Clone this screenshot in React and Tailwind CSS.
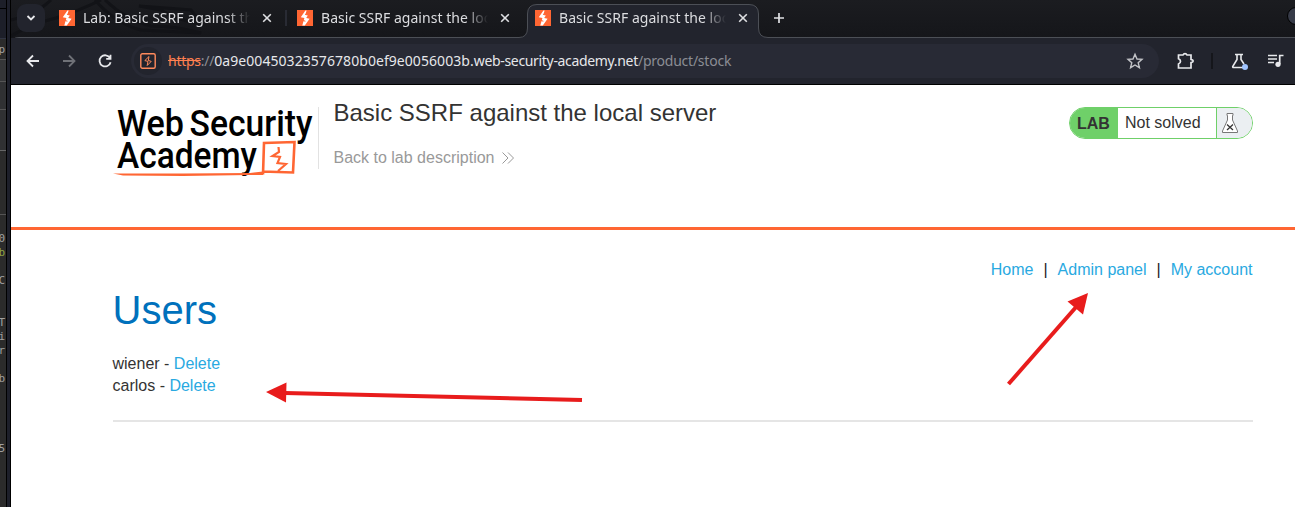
import React from "react";

function BoltIcon({ className }) {
  return (
    <svg className={className} viewBox="0 0 16 16">
      <rect width="16" height="16" fill="#ff6633" />
      <path d="M8.400 .500 L3.800 7.300 L7.400 7.900 L5.300 15.600 L7.800 15.600 L12.600 8.800 L9.200 7.900 L11 5.300 L8.400 4.600 L9.600 .500 Z" fill="#fff" />
      <path d="M8 4.200 L10.800 5.200 M5.600 10.400 L8.400 11.200" stroke="#ff6633" strokeWidth="1" />
    </svg>
  );
}

function Close() {
  return (
    <svg className="size-[10px] shrink-0" viewBox="0 0 10 10" stroke="#dfe0e3" strokeWidth="1.6">
      <path d="M1.2 1.2 L8.8 8.8 M8.8 1.2 L1.2 8.8" />
    </svg>
  );
}

function Tab({ title }) {
  return (
    <div className="flex w-[238px] shrink-0 items-center pl-2">
      <BoltIcon className="size-4 shrink-0" />
      <div className="ml-2 w-[167px] overflow-hidden whitespace-nowrap text-[14px] leading-5 tracking-[0.03px] text-[#dcdde0] [mask-image:linear-gradient(to_right,black_144px,transparent_167px)]">
        {title}
      </div>
      <div className="ml-3">
        <Close />
      </div>
    </div>
  );
}

function TabStrip() {
  return (
    <div className="relative flex h-[38px] items-start bg-linear-to-b from-[#1b1c20] to-[#15161a]">
      <svg className="absolute inset-0 h-[38px] w-[1284px]" viewBox="0 0 1284 38" fill="none">
        <path d="M0 36 Q20 24 45 18 Q70 10 90 0 M0 20 Q25 15 40 0 M84 0 Q105 24 130 30 L190 33 Q165 26 140 26 Q115 20 94 0 M128 6 L180 10 L190 24 Q165 20 150 10 Z" stroke="#121317" strokeWidth="3" />
        <path d="M0 47 V45 Q0 37.5 8 37.5 H508 Q516.500 37.500 516.500 28 V14 Q516.500 4.500 526 4.500 H738 Q747.500 4.500 747.500 14 V28 Q747.500 37.500 757 37.500 H1284 V50 H0 Z" fill="#22242d" stroke="#4c4f56" />
      </svg>
      <div className="relative flex h-9 items-center">
        <div className="ml-[6px] flex h-[28px] w-7 items-center justify-center rounded-[9px] bg-[#22242d]">
          <svg className="size-[10px]" viewBox="0 0 10 10" fill="none" stroke="#e8e9ec" strokeWidth="1.8">
            <path d="M1.500 3 L5 6.500 L8.500 3" />
          </svg>
        </div>
        <div className="ml-[6px] flex">
          <Tab title="Lab: Basic SSRF against the local server" />
          <Tab title="Basic SSRF against the local server" />
          <Tab title="Basic SSRF against the local server" />
        </div>
        <svg className="ml-[8px] size-3" viewBox="0 0 12 12" stroke="#e0e1e4" strokeWidth="1.700">
          <path d="M6 1 V11 M1 6 H11" />
        </svg>
      </div>
      <div className="absolute top-[10px] left-[274px] h-4 w-[2px] bg-[#292b34]" />
      <div className="absolute top-[7px] left-[1276px] h-[18px] w-2 overflow-hidden">
        <div className="size-[18px] rounded-full border border-black bg-[#373b48]" />
      </div>
    </div>
  );
}

function Toolbar() {
  return (
    <div className="flex h-[46px] items-center bg-[#22242d] pl-[14px]">
      <svg className="size-4" viewBox="0 0 16 16" fill="none" stroke="#e8e9ec" strokeWidth="1.800">
        <path d="M14 8 H3 M8 2.500 L2.500 8 L8 13.500" />
      </svg>
      <svg className="ml-5 size-4" viewBox="0 0 16 16" fill="none" stroke="#6f7177" strokeWidth="1.800">
        <path d="M2 8 H13 M8 2.500 L13.500 8 L8 13.500" />
      </svg>
      <svg className="ml-5 size-4" viewBox="0 0 16 16" fill="none" stroke="#e8e9ec" strokeWidth="1.800">
        <path d="M13 5 A5.600 5.600 0 1 0 13.600 9.200 M13.500 1.800 V5.900 H9.200" />
      </svg>
      <div className="ml-[18px] flex h-[34px] w-[1028px] items-center rounded-full bg-[#282a35] pl-[3px]">
        <div className="flex size-7 items-center justify-center rounded-full bg-[#22242d]">
          <svg className="size-4" viewBox="0 0 16 16" fill="none" stroke="#ff8a5c" strokeWidth="1.400">
            <rect x=".8" y=".8" width="14.400" height="14.400" rx="1.500" />
            <path d="M9 3.500 L4.800 7.600 L8 8.400 L7.200 12.500 M9 3.500 L8.300 7.400 L11.200 8.400 L7.200 12.500" strokeWidth="1" />
          </svg>
        </div>
        <div className="ml-[6px] flex-1 whitespace-pre text-[14px] leading-5 text-[#8b8d94]">
          <span className="tracking-[-0.25px]">
            <span className="text-[#ff8050] line-through">https</span>://
          </span>
          <span className="text-[#e6e7ea]">
            <span className="tracking-[0.06px]">0a9e00450323576780b0ef9e0056003b.</span>
            <span className="tracking-[-0.33px]">web-security-academy.net</span>
          </span>
          <span className="tracking-[-0.23px]">/product/stock</span>
        </div>
        <svg className="mr-[15px] size-[18px]" viewBox="0 0 18 18" fill="none" stroke="#c2c3c7" strokeWidth="1.400">
          <path d="M9 2.300 L11 7 L16 7.400 L12.200 10.700 L13.400 15.700 L9 13 L4.600 15.700 L5.800 10.700 L2 7.400 L7 7 Z" />
        </svg>
      </div>
      <svg className="ml-[17px] size-5" viewBox="0 0 20 20" fill="none" stroke="#e8e9ec" strokeWidth="1.700">
        <path d="M2.500 4 H7 Q7.600 2.600 9 2.600 Q10.400 2.600 11 4 H15 V8.300 Q17.200 8.800 17.200 10 Q17.200 11.200 15 11.700 V17 H2.500 V13 Q4.500 12 4.500 10.200 Q4.500 8.500 2.500 7.700 Z" />
      </svg>
      <div className="ml-[15px] h-4 w-[2px] bg-[#15161b]" />
      <svg className="ml-[18px] size-[18px]" viewBox="0 0 18 18" fill="none" stroke="#e8e9ec" strokeWidth="1.600">
        <path d="M4 2.500 H12 M6 2.500 V7.500 L1.700 14.500 Q1.500 15.500 2.500 15.500 H12 M10 2.500 V7.500 L13 12" />
        <circle cx="14" cy="15" r="3" fill="#a0c4ff" stroke="none" />
      </svg>
      <svg className="ml-[18px] size-[18px]" viewBox="0 0 18 18" fill="none" stroke="#e8e9ec" strokeWidth="1.700">
        <path d="M1 3.500 H10 M1 7 H10 M1 10.500 H7 M12.700 12 V3.500 H16.500" />
        <circle cx="11" cy="12.300" r="2.600" fill="#e8e9ec" stroke="none" />
      </svg>
    </div>
  );
}

function Logo() {
  return (
    <svg className="h-[80px] w-[204px] font-['Roboto',sans-serif]" viewBox="0 0 204 80" fill="none">
      <text x="4" y="34" fontSize="37" fontWeight="500" fill="#000" textLength="67" lengthAdjust="spacingAndGlyphs">Web</text>
      <text x="76.500" y="34" fontSize="37" fontWeight="500" fill="#000" textLength="123" lengthAdjust="spacingAndGlyphs">Security</text>
      <text x="4" y="66" fontSize="37" fontWeight="500" fill="#000" textLength="140" lengthAdjust="spacingAndGlyphs">Academy</text>
      <path d="M0 71.500 L70 71.500 L137 71 L150 69.500 L150 73 L137 73 L70 74 L10 73.500 Z" fill="#ff6633" />
      <path d="M150 72.500 L151 41 L181.500 40 L180 70.500 L149 69.500" stroke="#ff6633" strokeWidth="2.600" />
      <path d="M165.500 45 L166 50 L159.500 54 L167 55 L164.500 61 L173 62 L165 69" stroke="#ff6633" strokeWidth="2.200" />
    </svg>
  );
}

function LabHeader() {
  return (
    <header className="flex h-[145px] items-start border-b-[3px] border-[#ff6633] pr-[42px] pl-[101.5px]">
      <div className="flex h-[85px] w-[205px] items-start pt-[17px]">
        <Logo />
      </div>
      <div className="mt-[22px] h-[62px] w-px bg-[#e2e2e2]" />
      <div className="ml-[15px] flex-1 pt-[13px]">
        <h1 className="text-[24px] leading-[30px] text-[#333]">Basic SSRF against the local server</h1>
        <a className="mt-[19px] flex items-center text-[16px] leading-[22px] text-[#999]">
          Back to lab description
          <svg className="ml-2 h-3 w-3" viewBox="0 0 12 12" fill="none" stroke="#999" strokeWidth="1">
            <path d="M0.500 0.500 L6 6 L0.500 11.500 M6 0.500 L11.500 6 L6 11.500" />
          </svg>
        </a>
      </div>
      <div className="mt-[22px] flex h-8 w-[184px] overflow-hidden rounded-full border border-[#6fd069] text-[16px] text-[#333]">
        <div className="flex w-12 items-center bg-[#6fd069] pt-px pl-[7px] font-bold">LAB</div>
        <div className="flex w-[99px] items-center border-r border-[#6fd069] pl-[7px]">Not solved</div>
        <div className="flex flex-1 items-center bg-[#ebeff2] pl-[5px]">
          <svg className="h-5 w-4" viewBox="0 0 16 20" fill="none" stroke="#777" strokeWidth="1">
            <path d="M5 .500 H11 V2.500 H10.500 V7 L15.500 18 V19.500 H.500 V18 L5.500 7 V2.500 H5 Z" fill="#fff" />
            <path d="M5 11.500 L11 17 M11 11.500 L5 17" stroke="#333" strokeWidth="1.300" />
          </svg>
        </div>
      </div>
    </header>
  );
}

function UserRow({ name }) {
  return (
    <div>
      {name} - <a className="text-[#29a9e1]">Delete</a>
    </div>
  );
}

function Page() {
  return (
    <div className="relative flex-1 bg-white font-['Liberation_Sans',Arial,sans-serif]">
      <LabHeader />
      <main className="mr-[42.5px] ml-[101.5px] border-b-2 border-[#e5e5e5] pt-[29px] pb-[23px] text-[16px] leading-[22px] text-[#333]">
        <nav className="flex justify-end gap-[10px] text-[#29a9e1]">
          <a>Home</a>
          <span className="text-[#222]">|</span>
          <a>Admin panel</a>
          <span className="text-[#222]">|</span>
          <a>My account</a>
        </nav>
        <h2 className="mt-[5px] mb-[19px] text-[40px] leading-[48px] text-[#0071bc]">Users</h2>
        <UserRow name="wiener" />
        <UserRow name="carlos" />
      </main>
      <svg className="absolute top-0 left-0 h-[422px] w-[1284px]" viewBox="11 85 1284 422" stroke="#e81c1c" fill="#e81c1c">
        <path d="M582 400 L285 393" strokeWidth="4" />
        <path d="M266 392 L286.500 382.500 L286 402.500 Z" stroke="none" />
        <path d="M1008.500 384 L1077 306" strokeWidth="4" />
        <path d="M1088 293 L1067.500 301.500 L1083 314.500 Z" stroke="none" />
      </svg>
    </div>
  );
}

const letters = [
  ["p", 43, "text-[#a0a0a0]"],
  ["0", 232, "text-[#a0a0a0]"],
  ["b", 246, "text-[#91a843]"],
  ["C", 274, "text-[#a0a0a0]"],
  ["T", 316, "text-[#a0a0a0]"],
  ["i", 330, "text-[#a0a0a0]"],
  ["r", 344, "text-[#a0a0a0]"],
  ["b", 372, "text-[#a0a0a0]"],
  ["5", 442, "text-[#a0a0a0]"],
];

function EditorSliver() {
  return (
    <div className="relative flex w-[11px] shrink-0 overflow-hidden">
      <div className="w-[6px] bg-[#2b2b2b]">
        <div className="h-[39px] border-b border-[#303442] bg-[#1d1f29]">
          <div className="h-[9px] border-b border-black" />
        </div>
        <div className="h-[21px] border-b border-[#555] bg-[#2b2b2b]" />
        <div className="h-[22px] border-b border-[#555] bg-[#353638]" />
        <div className="h-[28px] border-b border-[#555] bg-[#303133]" />
        <div className="h-[41px] border-b border-[#666] bg-[#303133]" />
        <div className="h-[64px] border-b border-[#555]" />
      </div>
      <div className="w-px bg-black" />
      <div className="w-[3px] bg-[#1d1f2a]" />
      <div className="w-px bg-black" />
      <div className="absolute inset-y-0 left-0 w-[6px] overflow-hidden font-['DejaVu_Sans_Mono',monospace] text-[11px] leading-[14px]">
        {letters.map(([char, top, color]) => (
          <span key={top} className={"absolute -left-[1.500px] " + color} style={{ top }}>
            {char}
          </span>
        ))}
      </div>
    </div>
  );
}

export default function App() {
  return (
    <div className="flex h-[507px] w-[1295px] overflow-hidden bg-black font-['Noto_Sans',sans-serif]">
      <EditorSliver />
      <div className="flex w-[1284px] flex-col">
        <TabStrip />
        <Toolbar />
        <div className="h-px bg-black" />
        <Page />
      </div>
    </div>
  );
}
